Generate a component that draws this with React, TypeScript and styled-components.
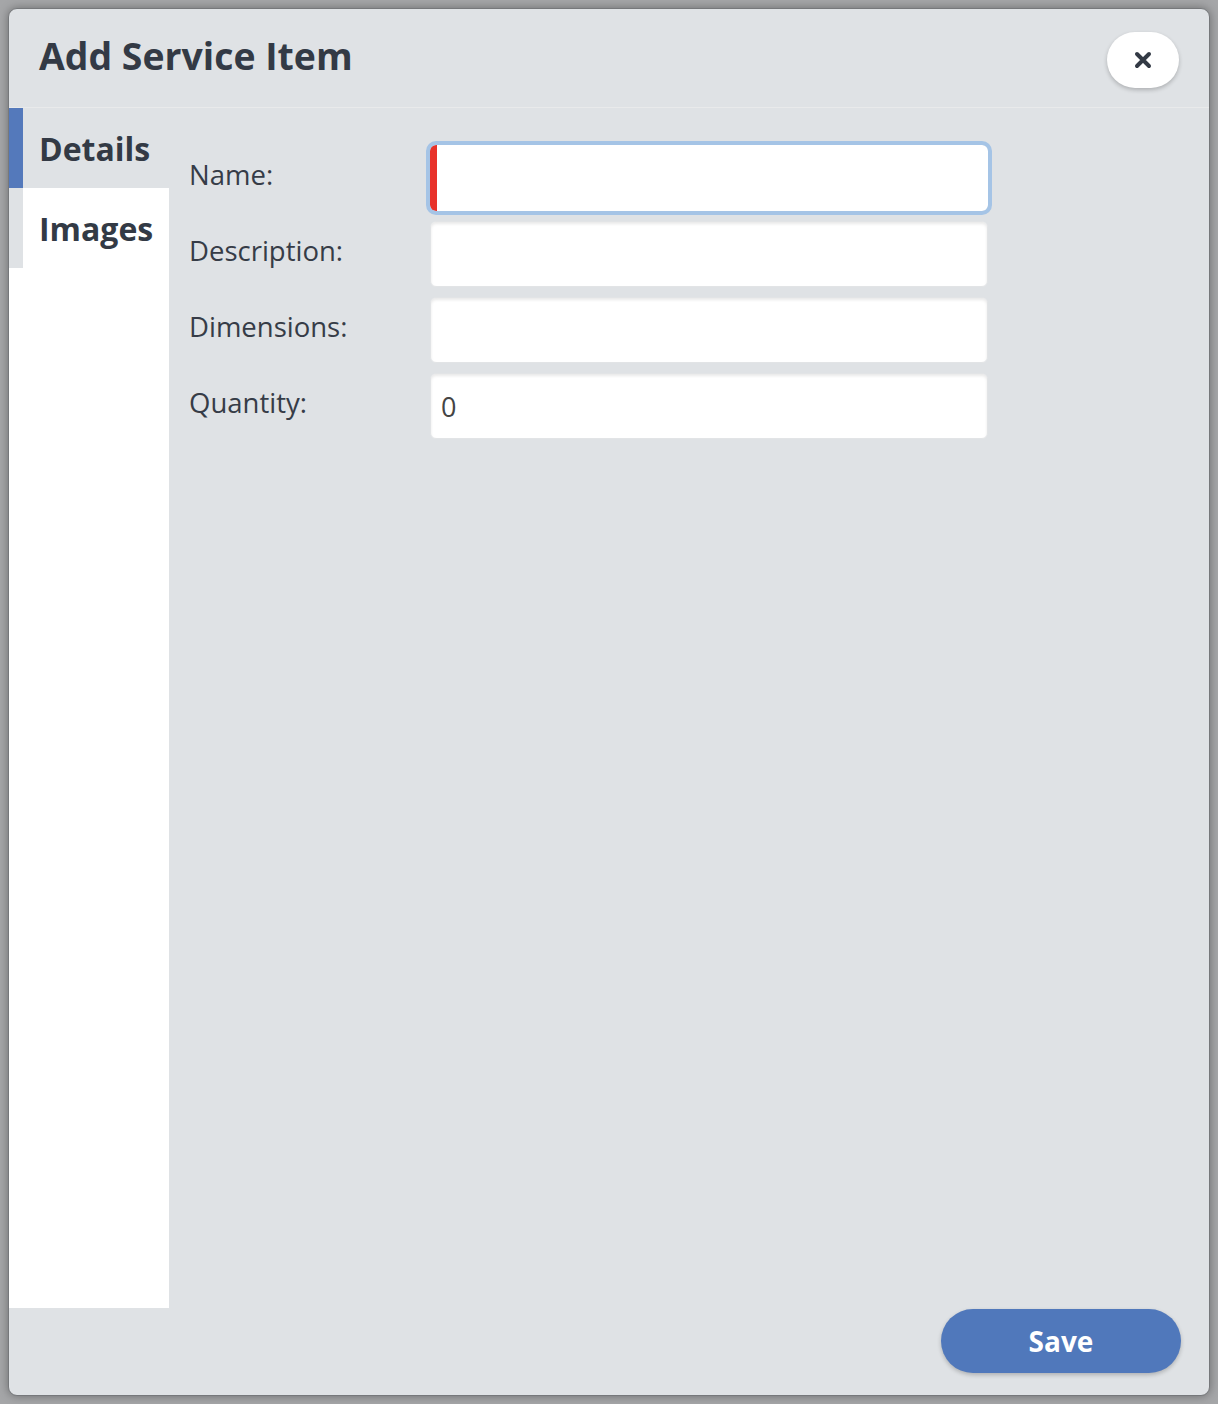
import React from "react";
import styled, { createGlobalStyle } from "styled-components";

const GlobalStyle = createGlobalStyle`
  html, body { margin: 0; padding: 0; }
  body { font-family: "Open Sans", "Noto Sans", sans-serif; background: #a5a6a8; }
  * { box-sizing: border-box; }
`;

const Backdrop = styled.div`
  width: 1218px;
  height: 1404px;
  padding: 8px;
  background: #a5a6a8;
`;

const Modal = styled.div`
  width: 1202px;
  height: 1388px;
  background: #dfe2e5;
  border: 1px solid #76787b;
  border-radius: 9px;
  box-shadow: 0 0 10px rgba(0, 0, 0, 0.35);
  display: flex;
  flex-direction: column;
  overflow: hidden;
`;

const Header = styled.div`
  height: 99px;
  flex: none;
  display: flex;
  align-items: center;
  justify-content: space-between;
  padding: 0 30px 0 30px;
  border-bottom: 1px solid #e9eaeb;
`;

const Title = styled.h1`
  margin: 0;
  font-size: 37.4px;
  font-weight: 700;
  color: #333a45;
  line-height: 1;
  padding-bottom: 4px;
`;

const CloseButton = styled.button`
  width: 72px;
  height: 56px;
  border: none;
  border-radius: 28px;
  background: #ffffff;
  box-shadow: 0 2px 4px rgba(0, 0, 0, 0.22);
  display: flex;
  align-items: center;
  justify-content: center;
  padding: 0;
  margin-top: 4px;
  cursor: pointer;
`;

const Main = styled.div`
  flex: 1;
  display: flex;
  min-height: 0;
`;

const TabList = styled.div`
  width: 160px;
  flex: none;
  background: #ffffff;
  display: flex;
  flex-direction: column;
`;

const Tab = styled.div<{ $active?: boolean }>`
  height: 80px;
  display: flex;
  align-items: center;
  padding-left: 16px;
  border-left: 14px solid ${(p) => (p.$active ? "#5479bb" : "#dfe2e5")};
  background: ${(p) => (p.$active ? "#dfe2e5" : "#ffffff")};
  font-size: 32px;
  font-weight: 700;
  color: #333a45;
`;

const Content = styled.div`
  flex: 1;
  padding: 37px 20px 0 20px;
`;

const Form = styled.div`
  display: grid;
  grid-template-columns: 241px 558px;
  grid-auto-rows: 66px;
  row-gap: 10px;
  align-items: center;
`;

const Label = styled.label`
  font-size: 27.5px;
  font-weight: 400;
  color: #363c47;
  padding-bottom: 8px;
`;

const Input = styled.input<{ $invalid?: boolean; $focused?: boolean }>`
  width: 558px;
  height: 66px;
  border: 1px solid #e2e4e6;
  border-radius: 6px;
  background: #ffffff;
  box-shadow: inset 0 2px 3px rgba(0, 0, 0, 0.09);
  font-family: "Open Sans", "Noto Sans", sans-serif;
  font-size: 27px;
  color: #444444;
  padding: 0 10px;
  outline: none;
  ${(p) =>
    p.$invalid
      ? `border: none; border-left: 7px solid #e8322a; box-shadow: none;`
      : ""}
  ${(p) => (p.$focused ? `outline: 4px solid #a5c4e6; outline-offset: 0;` : "")}
`;

const Footer = styled.div`
  height: 87px;
  flex: none;
  display: flex;
  justify-content: flex-end;
  align-items: flex-start;
  padding: 0 28px 0 0;
`;

const SaveButton = styled.button`
  width: 240px;
  height: 64px;
  margin-top: 1px;
  border: none;
  border-radius: 32px;
  background: #5078bb;
  color: #ffffff;
  font-family: "Open Sans", "Noto Sans", sans-serif;
  font-size: 28px;
  font-weight: 700;
  box-shadow: 0 2px 4px rgba(0, 0, 0, 0.22);
  cursor: pointer;
`;

const CloseIcon = () => (
  <svg width="18" height="18" viewBox="0 0 18 18">
    <path d="M3 3 L15 15 M15 3 L3 15" stroke="#333a45" strokeWidth="4" strokeLinecap="round" />
  </svg>
);

export default function App() {
  return (
    <>
      <GlobalStyle />
      <Backdrop>
        <Modal>
          <Header>
            <Title>Add Service Item</Title>
            <CloseButton aria-label="Close">
              <CloseIcon />
            </CloseButton>
          </Header>
          <Main>
            <TabList>
              <Tab $active>Details</Tab>
              <Tab>Images</Tab>
            </TabList>
            <Content>
              <Form>
                <Label>Name:</Label>
                <Input $invalid $focused defaultValue="" />
                <Label>Description:</Label>
                <Input defaultValue="" />
                <Label>Dimensions:</Label>
                <Input defaultValue="" />
                <Label>Quantity:</Label>
                <Input defaultValue="0" />
              </Form>
            </Content>
          </Main>
          <Footer>
            <SaveButton>Save</SaveButton>
          </Footer>
        </Modal>
      </Backdrop>
    </>
  );
}
